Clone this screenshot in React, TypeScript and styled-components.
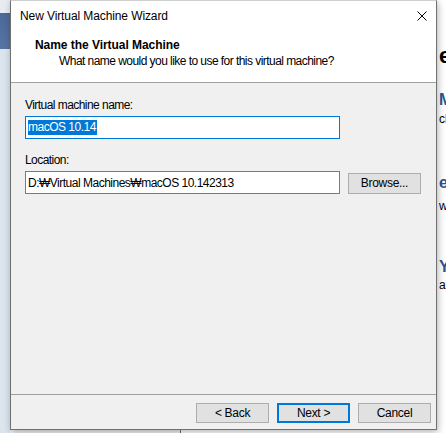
import React from "react";
import styled, { createGlobalStyle } from "styled-components";

const GlobalStyle = createGlobalStyle`
  html, body { margin: 0; padding: 0; background: #ffffff; }
  body {
    width: 446px;
    height: 433px;
    overflow: hidden;
    font-family: "Liberation Sans", "DejaVu Sans", Arial, sans-serif;
    font-size: 12px;
    color: #000;
  }
  * { box-sizing: border-box; }
`;

const Screen = styled.div`
  width: 446px;
  height: 433px;
  display: flex;
  flex-direction: column;
  overflow: hidden;
  background: #ffffff;
`;

const Stage = styled.div`
  display: flex;
  height: 430px;
`;

const LeftBackdrop = styled.div`
  width: 10px;
  display: flex;
  flex-direction: column;
`;

const BackdropBlock = styled.div<{ $h?: number; $bg: string }>`
  ${(p) => (p.$h ? `height: ${p.$h}px;` : "flex: 1;")}
  background: ${(p) => p.$bg};
`;

const Dialog = styled.div`
  width: 427px;
  display: flex;
  flex-direction: column;
  background: #f0f0f0;
  border: 1px solid #707070;
  border-top-color: #cfcfcf;
  position: relative;
  z-index: 1;
  box-shadow: 1px 2px 7px rgba(0, 0, 0, 0.3);
`;

const TitleBar = styled.div`
  height: 29px;
  background: #ffffff;
  display: flex;
  align-items: center;
  justify-content: space-between;
  padding: 0 9px 0 9px;
`;

const TitleText = styled.span`
  font-size: 12px;
  line-height: 16px;
  letter-spacing: -0.1px;
  color: #000;
`;

const CloseIcon = styled.svg`
  width: 10px;
  height: 10px;
  display: block;
`;

const Header = styled.div`
  height: 52px;
  background: #ffffff;
  padding: 7px 0 0 24px;
  display: flex;
  flex-direction: column;
`;

const HeaderTitle = styled.div`
  font-weight: bold;
  font-size: 12px;
  line-height: 16px;
  letter-spacing: -0.05px;
`;

const HeaderSubtitle = styled.div`
  font-size: 12px;
  line-height: 16px;
  letter-spacing: -0.55px;
  margin-left: 24px;
`;

const Rule = styled.div`
  height: 1px;
  background: #a0a0a0;
`;

const Body = styled.div`
  flex: 1;
  padding: 14px 15px 0 14px;
  display: flex;
  flex-direction: column;
`;

const FieldLabel = styled.div<{ $gap?: number }>`
  font-size: 12px;
  line-height: 16px;
  letter-spacing: -0.55px;
  margin-top: ${(p) => p.$gap ?? 0}px;
  margin-bottom: 3px;
`;

const FieldRow = styled.div`
  display: flex;
  align-items: center;
  gap: 8px;
`;

const TextBox = styled.div<{ $focused?: boolean }>`
  width: 315px;
  height: 23px;
  background: #ffffff;
  border: 1px solid ${(p) => (p.$focused ? "#0078d7" : "#7a7a7a")};
  padding: 0 2px;
  display: flex;
  align-items: center;
  font-size: 12px;
  letter-spacing: -0.5px;
  white-space: nowrap;
  overflow: hidden;
`;

const Selected = styled.span`
  background: #0078d7;
  color: #ffffff;
  line-height: 15px;
  padding-right: 1px;
`;

const PushButton = styled.button<{ $default?: boolean }>`
  width: 73px;
  height: 20px;
  background: #e1e1e1;
  border: ${(p) => (p.$default ? "2px solid #0078d7" : "1px solid #adadad")};
  font-family: inherit;
  font-size: 12px;
  letter-spacing: -0.3px;
  color: #000;
  padding: 0;
  display: flex;
  align-items: center;
  justify-content: center;
`;

const BrowseButton = styled(PushButton)`
  height: 21px;
  margin-top: 1px;
`;

const Footer = styled.div`
  height: 34px;
  display: flex;
  justify-content: flex-end;
  align-items: flex-start;
  gap: 8px;
  padding: 8px 5px 0 0;
`;

const RightBackdrop = styled.div`
  flex: 1;
  background: #ffffff;
  overflow: hidden;
  display: flex;
  flex-direction: column;
  padding-left: 2px;
  white-space: nowrap;
`;

const BackText = styled.div<{ $gap: number; $kind: "h1" | "h2" | "p" }>`
  margin-top: ${(p) => p.$gap}px;
  font-family: "Liberation Sans", Arial, sans-serif;
  font-size: ${(p) => (p.$kind === "h1" ? 22 : p.$kind === "h2" ? 16 : 12)}px;
  line-height: ${(p) => (p.$kind === "h1" ? 24 : p.$kind === "h2" ? 18 : 14)}px;
  font-weight: ${(p) => (p.$kind === "p" ? "normal" : "bold")};
  color: ${(p) => (p.$kind === "h2" ? "#2a5594" : "#000")};
`;

const BottomBackdrop = styled.div`
  height: 3px;
  display: flex;
`;

const BottomLeft = styled.div`
  width: 181px;
  background: linear-gradient(to right, #dbe4ed 0 10px, #eef0f2 10px);
  border-right: 1px solid #6d6d6d;
`;

const BottomRight = styled.div`
  flex: 1;
  background: #ffffff;
`;

export default function App() {
  return (
    <Screen>
      <GlobalStyle />
      <Stage>
        <LeftBackdrop>
          <BackdropBlock $h={13} $bg="#e6ecf2" />
          <BackdropBlock $h={36} $bg="linear-gradient(#4b6899, #5874a4)" />
          <BackdropBlock $bg="#dce5ee" />
        </LeftBackdrop>
        <Dialog>
          <TitleBar>
            <TitleText>New Virtual Machine Wizard</TitleText>
            <CloseIcon viewBox="0 0 10 10">
              <path d="M0.5 0.5 L9.5 9.5 M9.5 0.5 L0.5 9.5" stroke="#000" strokeWidth="1" fill="none" />
            </CloseIcon>
          </TitleBar>
          <Header>
            <HeaderTitle>Name the Virtual Machine</HeaderTitle>
            <HeaderSubtitle>What name would you like to use for this virtual machine?</HeaderSubtitle>
          </Header>
          <Rule />
          <Body>
            <FieldLabel>Virtual machine name:</FieldLabel>
            <FieldRow>
              <TextBox $focused>
                <Selected>macOS 10.14</Selected>
              </TextBox>
            </FieldRow>
            <FieldLabel $gap={13}>Location:</FieldLabel>
            <FieldRow>
              <TextBox>D:₩Virtual Machines₩macOS 10.142313</TextBox>
              <BrowseButton>Browse...</BrowseButton>
            </FieldRow>
          </Body>
          <Rule />
          <Footer>
            <PushButton>&lt; Back</PushButton>
            <PushButton $default>Next &gt;</PushButton>
            <PushButton>Cancel</PushButton>
          </Footer>
        </Dialog>
        <RightBackdrop>
          <BackText $gap={44} $kind="h1">er</BackText>
          <BackText $gap={23} $kind="h2">M</BackText>
          <BackText $gap={3} $kind="p">ch</BackText>
          <BackText $gap={48} $kind="h2">e</BackText>
          <BackText $gap={7} $kind="p">wh</BackText>
          <BackText $gap={45} $kind="h2">Yo</BackText>
          <BackText $gap={2} $kind="p">ap</BackText>
        </RightBackdrop>
      </Stage>
      <BottomBackdrop>
        <BottomLeft />
        <BottomRight />
      </BottomBackdrop>
    </Screen>
  );
}
